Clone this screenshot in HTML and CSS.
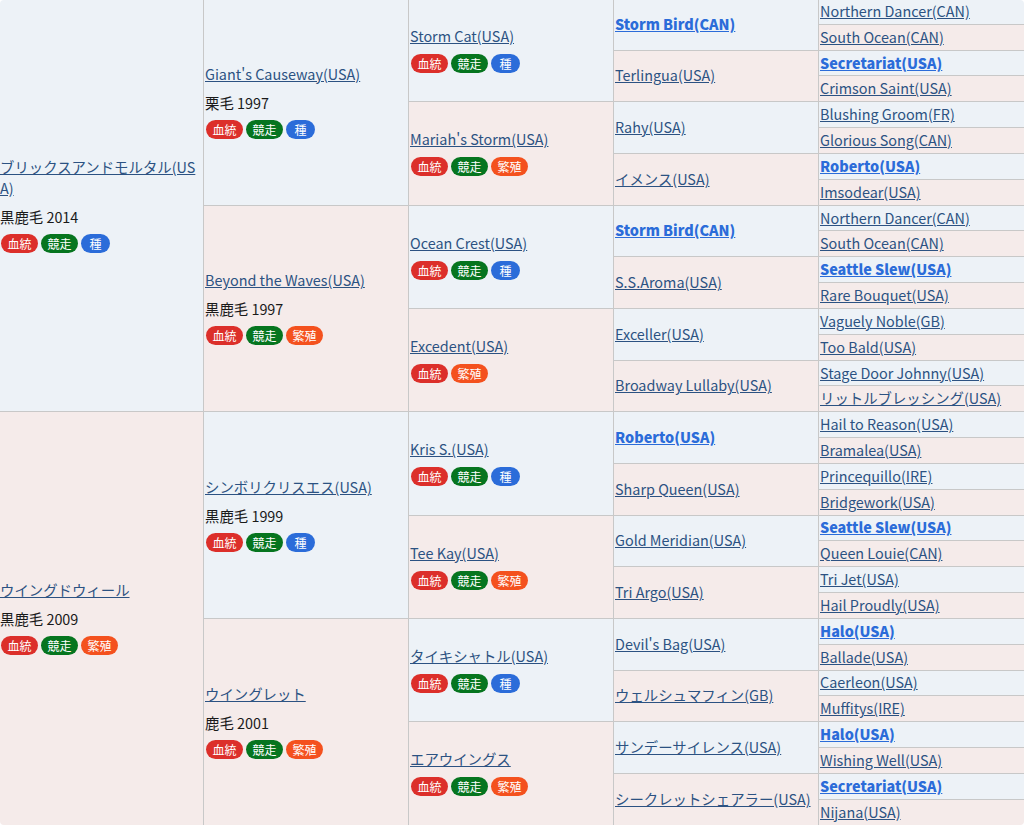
FILE: index.html
```html
<!DOCTYPE html>
<html lang="ja">
<head>
<meta charset="utf-8">
<title>血統表</title>
<link rel="stylesheet" href="styles.css">
</head>
<body>
<div class="frame">
<table class="ped">
<colgroup><col class="c1"><col class="c2"><col class="c3"><col class="c4"><col class="c5"></colgroup>
<tbody>
<tr>
<td rowspan="16" class="m"><a href="#">ブリックスアンドモルタル(USA)</a><p class="info">黒鹿毛 2014</p><div class="tags"><span class="tag r">血統</span><span class="tag g">競走</span><span class="tag b">種</span></div></td>
<td rowspan="8" class="m"><a href="#">Giant's Causeway(USA)</a><p class="info">栗毛 1997</p><div class="tags"><span class="tag r">血統</span><span class="tag g">競走</span><span class="tag b">種</span></div></td>
<td rowspan="4" class="m"><a href="#">Storm Cat(USA)</a><div class="tags t3"><span class="tag r">血統</span><span class="tag g">競走</span><span class="tag b">種</span></div></td>
<td rowspan="2" class="m"><a href="#" class="x">Storm Bird(CAN)</a></td>
<td class="m"><a href="#">Northern Dancer(CAN)</a></td>
</tr>
<tr><td class="f"><a href="#">South Ocean(CAN)</a></td></tr>
<tr><td rowspan="2" class="f"><a href="#">Terlingua(USA)</a></td><td class="m"><a href="#" class="x">Secretariat(USA)</a></td></tr>
<tr><td class="f"><a href="#">Crimson Saint(USA)</a></td></tr>
<tr>
<td rowspan="4" class="f"><a href="#">Mariah's Storm(USA)</a><div class="tags t3"><span class="tag r">血統</span><span class="tag g">競走</span><span class="tag o">繁殖</span></div></td>
<td rowspan="2" class="m"><a href="#">Rahy(USA)</a></td>
<td class="m"><a href="#">Blushing Groom(FR)</a></td>
</tr>
<tr><td class="f"><a href="#">Glorious Song(CAN)</a></td></tr>
<tr><td rowspan="2" class="f"><a href="#">イメンス(USA)</a></td><td class="m"><a href="#" class="x">Roberto(USA)</a></td></tr>
<tr><td class="f"><a href="#">Imsodear(USA)</a></td></tr>
<tr>
<td rowspan="8" class="f"><a href="#">Beyond the Waves(USA)</a><p class="info">黒鹿毛 1997</p><div class="tags"><span class="tag r">血統</span><span class="tag g">競走</span><span class="tag o">繁殖</span></div></td>
<td rowspan="4" class="m"><a href="#">Ocean Crest(USA)</a><div class="tags t3"><span class="tag r">血統</span><span class="tag g">競走</span><span class="tag b">種</span></div></td>
<td rowspan="2" class="m"><a href="#" class="x">Storm Bird(CAN)</a></td>
<td class="m"><a href="#">Northern Dancer(CAN)</a></td>
</tr>
<tr><td class="f"><a href="#">South Ocean(CAN)</a></td></tr>
<tr><td rowspan="2" class="f"><a href="#">S.S.Aroma(USA)</a></td><td class="m"><a href="#" class="x">Seattle Slew(USA)</a></td></tr>
<tr><td class="f"><a href="#">Rare Bouquet(USA)</a></td></tr>
<tr>
<td rowspan="4" class="f"><a href="#">Excedent(USA)</a><div class="tags t3"><span class="tag r">血統</span><span class="tag o">繁殖</span></div></td>
<td rowspan="2" class="m"><a href="#">Exceller(USA)</a></td>
<td class="m"><a href="#">Vaguely Noble(GB)</a></td>
</tr>
<tr><td class="f"><a href="#">Too Bald(USA)</a></td></tr>
<tr><td rowspan="2" class="f"><a href="#">Broadway Lullaby(USA)</a></td><td class="m"><a href="#">Stage Door Johnny(USA)</a></td></tr>
<tr><td class="f"><a href="#">リットルブレッシング(USA)</a></td></tr>
<tr>
<td rowspan="16" class="f"><a href="#">ウイングドウィール</a><p class="info">黒鹿毛 2009</p><div class="tags"><span class="tag r">血統</span><span class="tag g">競走</span><span class="tag o">繁殖</span></div></td>
<td rowspan="8" class="m"><a href="#">シンボリクリスエス(USA)</a><p class="info">黒鹿毛 1999</p><div class="tags"><span class="tag r">血統</span><span class="tag g">競走</span><span class="tag b">種</span></div></td>
<td rowspan="4" class="m"><a href="#">Kris S.(USA)</a><div class="tags t3"><span class="tag r">血統</span><span class="tag g">競走</span><span class="tag b">種</span></div></td>
<td rowspan="2" class="m"><a href="#" class="x">Roberto(USA)</a></td>
<td class="m"><a href="#">Hail to Reason(USA)</a></td>
</tr>
<tr><td class="f"><a href="#">Bramalea(USA)</a></td></tr>
<tr><td rowspan="2" class="f"><a href="#">Sharp Queen(USA)</a></td><td class="m"><a href="#">Princequillo(IRE)</a></td></tr>
<tr><td class="f"><a href="#">Bridgework(USA)</a></td></tr>
<tr>
<td rowspan="4" class="f"><a href="#">Tee Kay(USA)</a><div class="tags t3"><span class="tag r">血統</span><span class="tag g">競走</span><span class="tag o">繁殖</span></div></td>
<td rowspan="2" class="m"><a href="#">Gold Meridian(USA)</a></td>
<td class="m"><a href="#" class="x">Seattle Slew(USA)</a></td>
</tr>
<tr><td class="f"><a href="#">Queen Louie(CAN)</a></td></tr>
<tr><td rowspan="2" class="f"><a href="#">Tri Argo(USA)</a></td><td class="m"><a href="#">Tri Jet(USA)</a></td></tr>
<tr><td class="f"><a href="#">Hail Proudly(USA)</a></td></tr>
<tr>
<td rowspan="8" class="f"><a href="#">ウイングレット</a><p class="info">鹿毛 2001</p><div class="tags"><span class="tag r">血統</span><span class="tag g">競走</span><span class="tag o">繁殖</span></div></td>
<td rowspan="4" class="m"><a href="#">タイキシャトル(USA)</a><div class="tags t3"><span class="tag r">血統</span><span class="tag g">競走</span><span class="tag b">種</span></div></td>
<td rowspan="2" class="m"><a href="#">Devil's Bag(USA)</a></td>
<td class="m"><a href="#" class="x">Halo(USA)</a></td>
</tr>
<tr><td class="f"><a href="#">Ballade(USA)</a></td></tr>
<tr><td rowspan="2" class="f"><a href="#">ウェルシュマフィン(GB)</a></td><td class="m"><a href="#">Caerleon(USA)</a></td></tr>
<tr><td class="f"><a href="#">Muffitys(IRE)</a></td></tr>
<tr>
<td rowspan="4" class="f"><a href="#">エアウイングス</a><div class="tags t3"><span class="tag r">血統</span><span class="tag g">競走</span><span class="tag o">繁殖</span></div></td>
<td rowspan="2" class="m"><a href="#">サンデーサイレンス(USA)</a></td>
<td class="m"><a href="#" class="x">Halo(USA)</a></td>
</tr>
<tr><td class="f"><a href="#">Wishing Well(USA)</a></td></tr>
<tr><td rowspan="2" class="f"><a href="#">シークレットシェアラー(USA)</a></td><td class="m"><a href="#" class="x">Secretariat(USA)</a></td></tr>
<tr><td class="f"><a href="#">Nijana(USA)</a></td></tr>
</tbody>
</table>
</div>
</body>
</html>
```

FILE: styles.css
```css
html, body {
  margin: 0;
  padding: 0;
  background: #fff;
}
body {
  font-family: "Noto Sans CJK JP", "Noto Sans", sans-serif;
  font-size: 14.4px;
  line-height: 21px;
  color: #1a1a1a;
  overflow: hidden;
}
.frame {
  width: 1024px;
  height: 825px;
  overflow: hidden;
  border-radius: 4px;
}
.ped {
  width: 1024px;
  margin-top: -1px;
  table-layout: fixed;
  border-collapse: separate;
  border-spacing: 0;
}
.c1 { width: 204px; }
.c2, .c3, .c4, .c5 { width: 205px; }
tr { height: 25.84px; }
td {
  padding: 0 5px 2px 1px;
  border-right: 1px solid #c8c8c8;
  border-bottom: 1px solid #c8c8c8;
  vertical-align: middle;
  box-sizing: border-box;
  word-break: break-all;
}
td[rowspan="16"] { padding-left: 0; }
td:last-child { border-right: 0; }
.m { background: #edf2f7; }
.f { background: #f5ebea; }
a {
  color: #2c5282;
  text-decoration: underline;
}
a.x {
  color: #2b6cd9;
  font-weight: 900;
}
.info { margin: 8px 0 7px; }
.tags {
  display: flex;
  gap: 3px;
  padding-left: 1px;
}
.t3 { margin-top: 8px; }
.tag {
  display: block;
  min-width: 29px;
  box-sizing: border-box;
  height: 19px;
  padding: 0 6.5px;
  border-radius: 10px;
  color: #fff;
  font-size: 12px;
  line-height: 19px;
  text-align: center;
}
.r { background: #dc2f2a; }
.g { background: #06751f; }
.b { background: #2b6cd9; }
.o { background: #f4511e; }
```
